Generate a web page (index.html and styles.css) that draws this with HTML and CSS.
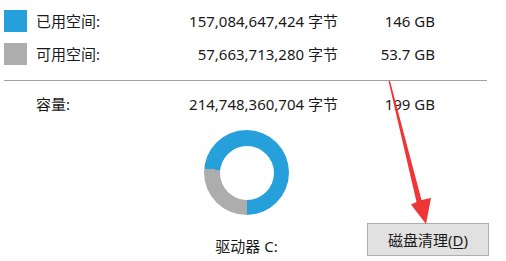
FILE: index.html
```html
<!DOCTYPE html>
<html lang="zh-CN">
<head>
<meta charset="utf-8">
<title>驱动器 C:</title>
<link rel="stylesheet" href="styles.css">
</head>
<body>
<div class="page">
  <div class="stats">
    <span class="swatch used"></span>
    <span class="label">已用空间:</span>
    <span class="bytes">157,084,647,424 字节</span>
    <span class="size">146 GB</span>

    <span class="swatch free"></span>
    <span class="label">可用空间:</span>
    <span class="bytes">57,663,713,280 字节</span>
    <span class="size">53.7 GB</span>
  </div>
  <div class="divider"></div>
  <div class="stats capacity">
    <span class="swatch none"></span>
    <span class="label">容量:</span>
    <span class="bytes">214,748,360,704 字节</span>
    <span class="size">199 GB</span>
  </div>
  <div class="bottom">
    <div class="donut"></div>
    <div class="footer">
      <span class="drive">驱动器 C:</span>
      <button class="cleanup">磁盘清理(<u>D</u>)</button>
    </div>
  </div>
  <svg class="arrow" width="506" height="261" viewBox="0 0 506 261">
    <polygon points="388.5,81 390,81 421.5,200 431,198 426,224 411,204.5 416.5,202" fill="#ef3535"/>
  </svg>
</div>
</body>
</html>
```
FILE: styles.css
```css
html, body {
  margin: 0;
  padding: 0;
  background: #ffffff;
}
body {
  font-family: "Noto Sans", "Noto Sans CJK SC", sans-serif;
  font-size: 15px;
  color: #1a1a1a;
  width: 506px;
  height: 261px;
  overflow: hidden;
}
.page {
  position: relative;
  padding: 10px 0 0 4px;
  width: 502px;
  height: 251px;
}
.stats {
  display: grid;
  grid-template-columns: 23px 120px 191px 97px;
  grid-auto-rows: 22px;
  row-gap: 11px;
  align-items: center;
  line-height: 20px;
}
.swatch {
  width: 23px;
  height: 22px;
}
.swatch.used { background: #26a0da; }
.swatch.free { background: #adadad; }
.label { padding-left: 9px; white-space: nowrap; }
.bytes, .size { text-align: right; white-space: nowrap; }
.divider {
  margin-top: 15px;
  width: 483px;
  height: 1px;
  background: #a0a0a0;
}
.capacity { margin-top: 12px; }
.bottom {
  width: 485px;
  margin-top: 15px;
  display: flex;
  flex-direction: column;
  align-items: center;
}
.donut {
  position: relative;
  width: 85px;
  height: 85px;
  border-radius: 50%;
  background: conic-gradient(from 179deg, #adadad 0deg 96.5deg, #26a0da 96.5deg 360deg);
}
.donut::after {
  content: "";
  position: absolute;
  left: 15.5px;
  top: 15.5px;
  width: 54px;
  height: 54px;
  border-radius: 50%;
  background: #ffffff;
}
.footer {
  align-self: stretch;
  margin-top: 8px;
  display: grid;
  grid-template-columns: 1fr auto 1fr;
  align-items: end;
}
.drive {
  grid-column: 2;
  line-height: 20px;
  white-space: nowrap;
}
.cleanup {
  grid-column: 3;
  justify-self: end;
  width: 122px;
  height: 33px;
  margin: 0;
  padding: 0;
  border: 1px solid #adadad;
  background: #e1e1e1;
  font: inherit;
  color: #1a1a1a;
  line-height: 20px;
}
.cleanup u { text-underline-offset: 2px; }
.arrow {
  position: absolute;
  left: 0;
  top: 0;
  pointer-events: none;
}
```
